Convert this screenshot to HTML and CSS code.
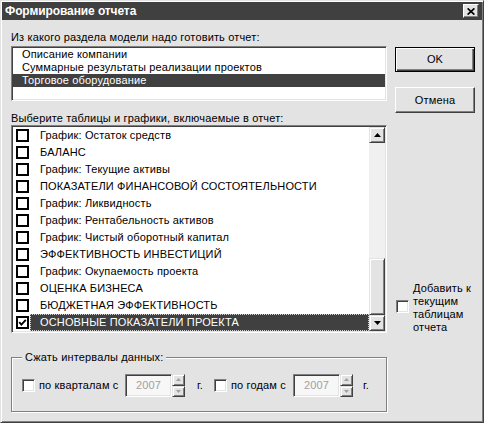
FILE: index.html
```html
<!DOCTYPE html>
<html lang="ru">
<head>
<meta charset="utf-8">
<title>Формирование отчета</title>
<link rel="stylesheet" href="styles.css">
</head>
<body>
<div class="window">
  <div class="titlebar">
    <span class="title">Формирование отчета</span>
    <span class="close"><svg width="8" height="7" viewBox="0 0 8 7"><path d="M0.6 0.4 L7.4 6.6 M7.4 0.4 L0.6 6.6" stroke="#000" stroke-width="1.7" fill="none"/></svg></span>
  </div>
  <div class="content">
    <div class="left-top">
      <div class="label">Из какого раздела модели надо готовить отчет:</div>
      <div class="listbox">
        <div class="item">Описание компании</div>
        <div class="item">Суммарные результаты реализации проектов</div>
        <div class="item selected">Торговое оборудование</div>
      </div>
      <div class="label label2">Выберите таблицы и графики, включаемые в отчет:</div>
      <div class="checklist">
        <div class="rows">
          <div class="row"><span class="cb"></span><span class="txt">График: Остаток средств</span></div>
          <div class="row"><span class="cb"></span><span class="txt">БАЛАНС</span></div>
          <div class="row"><span class="cb"></span><span class="txt">График: Текущие активы</span></div>
          <div class="row"><span class="cb"></span><span class="txt">ПОКАЗАТЕЛИ ФИНАНСОВОЙ СОСТОЯТЕЛЬНОСТИ</span></div>
          <div class="row"><span class="cb"></span><span class="txt">График: Ликвидность</span></div>
          <div class="row"><span class="cb"></span><span class="txt">График: Рентабельность активов</span></div>
          <div class="row"><span class="cb"></span><span class="txt">График: Чистый оборотный капитал</span></div>
          <div class="row"><span class="cb"></span><span class="txt">ЭФФЕКТИВНОСТЬ ИНВЕСТИЦИЙ</span></div>
          <div class="row"><span class="cb"></span><span class="txt">График: Окупаемость проекта</span></div>
          <div class="row"><span class="cb"></span><span class="txt">ОЦЕНКА БИЗНЕСА</span></div>
          <div class="row"><span class="cb"></span><span class="txt">БЮДЖЕТНАЯ ЭФФЕКТИВНОСТЬ</span></div>
          <div class="row"><span class="cb checked"><svg width="9" height="9" viewBox="0 0 9 9"><path d="M1.2 4.2 L3.4 6.6 L7.8 1.8" stroke="#000" stroke-width="1.9" fill="none"/></svg></span><span class="txt selected">ОСНОВНЫЕ ПОКАЗАТЕЛИ ПРОЕКТА</span></div>
        </div>
        <div class="vscroll">
          <div class="sbtn"><svg width="7" height="4" viewBox="0 0 7 4"><polygon points="3.5,0 7,4 0,4" fill="#000"/></svg></div>
          <div class="track"><div class="thumb"></div></div>
          <div class="sbtn"><svg width="7" height="4" viewBox="0 0 7 4"><polygon points="0,0 7,0 3.5,4" fill="#000"/></svg></div>
        </div>
      </div>
    </div>
    <div class="right-top">
      <div class="btn default">OK</div>
      <div class="btn cancel">Отмена</div>
      <div class="addopt"><span class="cb3d"></span><span class="addtext">Добавить к<br>текущим<br>таблицам<br>отчета</span></div>
    </div>
    <div class="group">
      <div class="group-title">Сжать интервалы данных:</div>
      <div class="grouprow">
        <span class="cb3d"></span>
        <span class="optlabel quarter">по кварталам с</span>
        <span class="spin">
          <span class="spin-input">2007</span>
          <span class="spin-btns">
            <span class="sb"><svg width="5" height="3" viewBox="0 0 5 3"><polygon points="2.5,0 5,3 0,3" fill="#a0a0a0"/></svg></span>
            <span class="sb"><svg width="5" height="3" viewBox="0 0 5 3"><polygon points="0,0 5,0 2.5,3" fill="#a0a0a0"/></svg></span>
          </span>
        </span>
        <span class="unit first">г.</span>
        <span class="cb3d"></span>
        <span class="optlabel year">по годам с</span>
        <span class="spin">
          <span class="spin-input">2007</span>
          <span class="spin-btns">
            <span class="sb"><svg width="5" height="3" viewBox="0 0 5 3"><polygon points="2.5,0 5,3 0,3" fill="#a0a0a0"/></svg></span>
            <span class="sb"><svg width="5" height="3" viewBox="0 0 5 3"><polygon points="0,0 5,0 2.5,3" fill="#a0a0a0"/></svg></span>
          </span>
        </span>
        <span class="unit last">г.</span>
      </div>
    </div>
  </div>
</div>
</body>
</html>
```
FILE: styles.css
```css
* { box-sizing: border-box; }
html, body { margin: 0; padding: 0; background: #e3e3e3; }
body {
  font-family: "Liberation Sans", Arial, sans-serif;
  font-size: 11px;
  line-height: 13px;
  letter-spacing: 0.15px;
  color: #000;
}
.window {
  width: 484px;
  height: 423px;
  border: 1px solid;
  border-color: #e3e3e3 #404040 #404040 #e3e3e3;
  padding: 1px;
  box-shadow: inset 1px 1px #fff, inset -1px -1px #808080;
  background: #e3e3e3;
}
.titlebar {
  height: 18px;
  background: #404040;
  display: flex;
  align-items: center;
  justify-content: space-between;
  padding: 0 3px 0 3px;
}
.title {
  color: #fff;
  font-weight: bold;
  font-size: 12px;
  letter-spacing: -0.1px;
  line-height: 18px;
}
.close {
  width: 16px;
  height: 14px;
  background: #e3e3e3;
  border: 1px solid;
  border-color: #fff #404040 #404040 #fff;
  box-shadow: inset -1px -1px #808080;
  display: flex;
  align-items: center;
  justify-content: center;
}
.close svg { display: block; }
.content {
  display: grid;
  grid-template-columns: 376px 80px;
  column-gap: 8px;
  padding: 11px 7px 0 9px;
}
.left-top { display: flex; flex-direction: column; }
.label { height: 13px; white-space: nowrap; }
.label2 { margin-top: 11px; }
.listbox {
  margin-top: 2px;
  height: 55px;
  background: #fff;
  border: 1px solid;
  border-color: #808080 #fff #fff #808080;
  box-shadow: inset 1px 1px #404040, inset -1px -1px #e3e3e3;
  padding: 1px;
}
.item { height: 13px; padding-left: 9px; white-space: nowrap; }
.item.selected { background: #404040; color: #fff; }
.checklist {
  height: 208px;
  background: #fff;
  border: 1px solid;
  border-color: #808080 #fff #fff #808080;
  box-shadow: inset 1px 1px #404040, inset -1px -1px #e3e3e3;
  padding: 1px;
  display: flex;
}
.rows { flex: 1; display: flex; flex-direction: column; min-width: 0; }
.row { height: 17px; display: flex; align-items: center; }
.cb {
  width: 13px;
  height: 13px;
  border: 2px solid #000;
  background: #fff;
  margin-left: 3px;
  flex: none;
  display: flex;
  align-items: center;
  justify-content: center;
}
.cb svg { display: block; }
.txt {
  margin-left: 1px;
  flex: 1;
  height: 17px;
  line-height: 15px;
  padding-left: 9px;
  border: 1px solid transparent;
  white-space: nowrap;
}
.txt.selected {
  background: #404040;
  color: #fff;
  border: 1px dotted #d0d0d0;
}
.vscroll {
  width: 16px;
  display: flex;
  flex-direction: column;
  background: #f0f0f0;
}
.sbtn, .thumb, .sb {
  background: #e3e3e3;
  border: 1px solid;
  border-color: #e3e3e3 #404040 #404040 #e3e3e3;
  box-shadow: inset 1px 1px #fff, inset -1px -1px #808080;
  display: flex;
  align-items: center;
  justify-content: center;
}
.sbtn { height: 16px; flex: none; }
.sbtn svg, .sb svg { display: block; }
.track { flex: 1; display: flex; flex-direction: column; justify-content: flex-end; }
.thumb { height: 57px; }
.right-top { display: flex; flex-direction: column; align-items: flex-start; }
.btn {
  width: 80px;
  display: flex;
  align-items: center;
  justify-content: center;
  background: #e3e3e3;
}
.btn.default {
  margin-top: 16px;
  height: 25px;
  border: 1px solid #000;
  box-shadow: inset 1px 1px #fff, inset -1px -1px #404040, inset -2px -2px #808080;
}
.btn.cancel {
  margin-top: 15px;
  height: 26px;
  border: 1px solid;
  border-color: #fff #404040 #404040 #fff;
  box-shadow: inset -1px -1px #808080;
}
.addopt {
  margin-top: auto;
  margin-bottom: -1px;
  margin-left: 1px;
  display: flex;
  align-items: center;
}
.addopt .cb3d { margin-right: 4px; margin-top: -3px; }
.cb3d {
  width: 13px;
  height: 13px;
  flex: none;
  background: #fff;
  border: 1px solid;
  border-color: #808080 #fff #fff #808080;
  box-shadow: inset 1px 1px #404040, inset -1px -1px #e3e3e3;
}
.group {
  grid-column: 1;
  margin-top: 24px;
  border: 1px solid #808080;
  box-shadow: inset 1px 1px #fff, 1px 1px #fff;
  padding: 0 10px 14px 10px;
}
.group-title {
  margin: -7px 0 0 0;
  padding: 0 3px;
  width: fit-content;
  background: #e3e3e3;
  height: 13px;
  white-space: nowrap;
}
.grouprow {
  margin-top: 10px;
  height: 23px;
  display: flex;
  align-items: center;
}
.optlabel { margin-left: 4px; white-space: nowrap; }
.optlabel.quarter { width: 86px; }
.optlabel.year { width: 62px; }
.spin { display: flex; height: 23px; }
.spin-input {
  width: 47px;
  height: 23px;
  background: #f7f7f7;
  color: #a0a0a0;
  border: 1px solid;
  border-color: #808080 #fff #fff #808080;
  box-shadow: inset 1px 1px #404040, inset -1px -1px #e3e3e3;
  display: flex;
  align-items: center;
  justify-content: center;
}
.spin-btns { display: flex; flex-direction: column; width: 13px; height: 23px; }
.sb { flex: 1; }
.unit.first { margin-left: 12px; width: 17px; }
.unit.last { margin-left: 10px; }
```
